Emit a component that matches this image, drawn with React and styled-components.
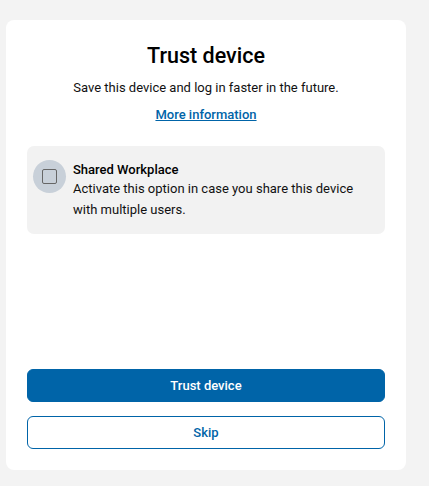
import React, { useState } from "react";
import styled, { createGlobalStyle } from "styled-components";

const GlobalStyle = createGlobalStyle`
  html, body {
    margin: 0;
    padding: 0;
    background: #f3f3f3;
    font-family: Roboto, "Noto Sans", sans-serif;
    color: #111;
  }
`;

function App() {
  const [shared, setShared] = useState(false);

  return (
    <Page>
      <GlobalStyle />
      <Card>
        <Header>
          <Title>Trust device</Title>
          <Subtitle>Save this device and log in faster in the future.</Subtitle>
          <InfoLink href="#">More information</InfoLink>
        </Header>

        <Option onClick={() => setShared(!shared)}>
          <CheckHalo>
            <CheckBox $checked={shared} />
          </CheckHalo>
          <OptionText>
            <OptionTitle>Shared Workplace</OptionTitle>
            <OptionDesc>
              Activate this option in case you share this device with multiple
              users.
            </OptionDesc>
          </OptionText>
        </Option>

        <Actions>
          <Button $primary>Trust device</Button>
          <Button>Skip</Button>
        </Actions>
      </Card>
    </Page>
  );
}

export default App;

const Page = styled.div`
  padding: 20px 23px 16px 6px;
`;

const Card = styled.div`
  background: #fff;
  border-radius: 8px;
  height: 450px;
  box-sizing: border-box;
  padding: 22px 21px 21px;
  display: flex;
  flex-direction: column;
`;

const Header = styled.div`
  display: flex;
  flex-direction: column;
  align-items: center;
  text-align: center;
`;

const Title = styled.h1`
  margin: 0;
  font-size: 21.5px;
  font-weight: 500;
  line-height: 28px;
  color: #000;
`;

const Subtitle = styled.p`
  margin: 9px 0 0;
  font-size: 13px;
  line-height: 18px;
  color: #111;
`;

const InfoLink = styled.a`
  margin-top: 9px;
  font-size: 13px;
  font-weight: 500;
  line-height: 18px;
  color: #0064a8;
  text-decoration: underline;
`;

const Option = styled.div`
  margin-top: 22px;
  background: #f2f2f2;
  border-radius: 7px;
  padding: 14px 16px 14px 6px;
  display: flex;
  align-items: flex-start;
  gap: 7px;
  cursor: pointer;
`;

const CheckHalo = styled.div`
  flex: none;
  width: 33px;
  height: 33px;
  border-radius: 50%;
  background: #c8d0d9;
  display: flex;
  align-items: center;
  justify-content: center;
`;

const CheckBox = styled.div`
  width: 13px;
  height: 13px;
  border: 1px solid #666;
  border-radius: 2px;
  background: ${(p) => (p.$checked ? "#0064a8" : "transparent")};
`;

const OptionText = styled.div`
  padding-top: 2px;
  display: flex;
  flex-direction: column;
`;

const OptionTitle = styled.div`
  font-size: 13px;
  font-weight: 500;
  line-height: 16px;
  color: #000;
`;

const OptionDesc = styled.div`
  font-size: 13px;
  line-height: 21px;
  color: #111;
`;

const Actions = styled.div`
  margin-top: auto;
  display: flex;
  flex-direction: column;
  gap: 14px;
`;

const Button = styled.button`
  height: 33px;
  border-radius: 6px;
  font-family: Roboto, "Noto Sans", sans-serif;
  font-size: 13px;
  font-weight: 500;
  cursor: pointer;
  border: 1px solid #0064a8;
  background: ${(p) => (p.$primary ? "#0064a8" : "#fff")};
  color: ${(p) => (p.$primary ? "#fff" : "#0064a8")};
`;
